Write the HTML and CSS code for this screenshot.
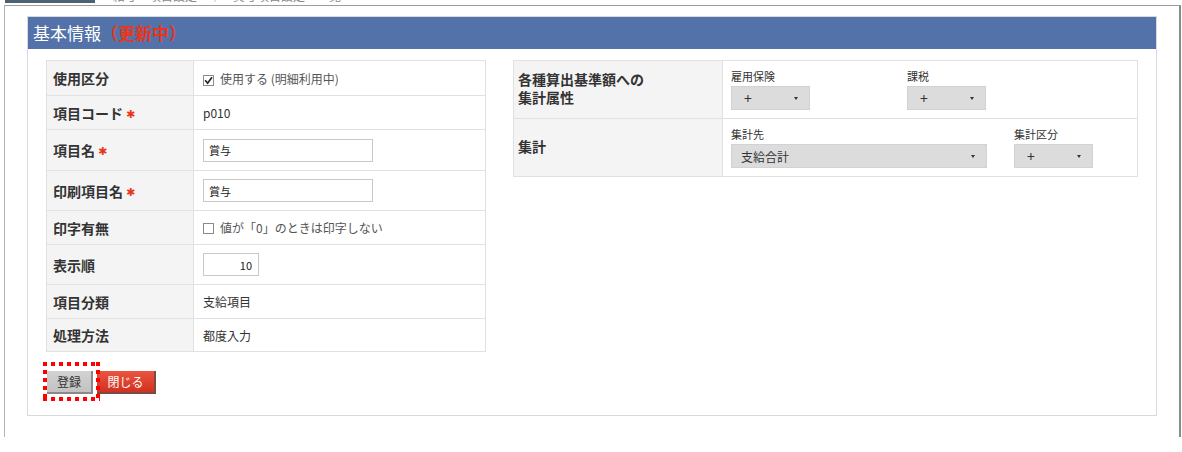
FILE: index.html
```html
<!DOCTYPE html>
<html lang="ja">
<head>
<meta charset="utf-8">
<title>基本情報</title>
<link rel="stylesheet" href="styles.css">
</head>
<body>
<div class="topstrip"><span class="tabbar"></span><span class="crumbs">給与　項目設定　｜　賞与項目設定　一覧</span></div>
<div class="frame">
  <div class="panel">
    <div class="panel-head"><span class="title">基本情報</span><span class="status">（更新中）</span></div>
    <div class="panel-body">
      <div class="tables">
        <table class="form form-left">
          <colgroup><col class="c-label-l"><col></colgroup>
          <tr class="r-s r-first"><th>使用区分</th><td><span class="cb"><svg viewBox="0 0 9 9" width="9" height="9"><path d="M1.2 4.3 L3.6 7.2 L8 1.2" fill="none" stroke="#222" stroke-width="1.7"/></svg></span><span class="cb-text">使用する (明細利用中)</span></td></tr>
          <tr class="r-s"><th>項目コード<span class="req">✱</span></th><td>p010</td></tr>
          <tr class="r-l r-big"><th>項目名<span class="req">✱</span></th><td><input class="txt" type="text" value="賞与"></td></tr>
          <tr class="r-l"><th>印刷項目名<span class="req">✱</span></th><td><input class="txt" type="text" value="賞与"></td></tr>
          <tr class="r-s"><th>印字有無</th><td><span class="cb"></span><span class="cb-text">値が「0」のときは印字しない</span></td></tr>
          <tr class="r-l"><th>表示順</th><td><input class="txt num" type="text" value="10"></td></tr>
          <tr class="r-s"><th>項目分類</th><td>支給項目</td></tr>
          <tr class="r-s r-last"><th>処理方法</th><td>都度入力</td></tr>
        </table>
        <table class="form form-right">
          <colgroup><col class="c-label-r"><col></colgroup>
          <tr class="r-r"><th>各種算出基準額への<br>集計属性</th>
            <td>
              <div class="fields">
                <div class="field f-first">
                  <div class="flabel">雇用保険</div>
                  <div class="select s-sm"><span>+</span><i class="caret"></i></div>
                </div>
                <div class="field">
                  <div class="flabel">課税</div>
                  <div class="select s-sm"><span>+</span><i class="caret"></i></div>
                </div>
              </div>
            </td></tr>
          <tr class="r-r"><th>集計</th>
            <td>
              <div class="fields">
                <div class="field f-wide">
                  <div class="flabel">集計先</div>
                  <div class="select s-lg"><span class="sel-text">支給合計</span><i class="caret"></i></div>
                </div>
                <div class="field">
                  <div class="flabel">集計区分</div>
                  <div class="select s-sm"><span>+</span><i class="caret"></i></div>
                </div>
              </div>
            </td></tr>
        </table>
      </div>
      <div class="actions">
        <span class="hl"><button class="btn btn-gray" type="button">登録</button></span>
        <button class="btn btn-red" type="button">閉じる</button>
      </div>
    </div>
  </div>
</div>
</body>
</html>
```
FILE: styles.css
```css
* { box-sizing: border-box; }
body {
  margin: 0;
  background: #fff;
  font-family: "Noto Sans CJK JP", "Noto Sans", sans-serif;
  color: #333;
}
.topstrip {
  height: 5px;
  overflow: hidden;
  display: flex;
  align-items: flex-start;
}
.tabbar {
  display: block;
  width: 90px;
  height: 3px;
  margin-left: 5px;
  background: #4b6272;
}
.crumbs {
  display: block;
  margin-left: 18px;
  margin-top: -10px;
  font-size: 12px;
  line-height: 12px;
  color: #888;
}
.frame {
  margin-left: 4px;
  width: 1177px;
  height: 432px;
  border-top: 1px solid #9c9c9c;
  border-left: 1px solid #b4b4b4;
  border-right: 2px solid #8a8a8a;
  padding: 10px 0 0 22px;
}
.panel {
  width: 1130px;
  height: 400px;
  border: 1px solid #d9d9d9;
  background: #fff;
}
.panel-head {
  height: 32px;
  background: #5272a9;
  padding-left: 5px;
  line-height: 32px;
  font-size: 17px;
  white-space: nowrap;
}
.title { color: #fff; }
.status { color: #e8361c; font-weight: bold; }
.panel-body {
  padding: 11px 18px 0 18px;
}
.tables {
  display: flex;
  align-items: flex-start;
  gap: 27px;
}
.form {
  border-collapse: collapse;
  table-layout: fixed;
  border: 1px solid #e1e1e1;
}
.form th, .form td {
  border: 1px solid #e1e1e1;
  padding: 0;
}
.form th {
  background: #f4f4f4;
  text-align: left;
  font-weight: bold;
  font-size: 14px;
  color: #333;
}
.form-left { width: 440px; }
.form-right { width: 625px; }
.c-label-l { width: 147px; }
.c-label-r { width: 209px; }
.form-left th { padding-left: 6px; }
.form-left td {
  padding-left: 9px;
  font-size: 12px;
  color: #333;
}
.r-s { height: 34px; }
.r-first { height: 35px; }
.r-last { height: 33px; }
.r-l { height: 40px; }
.r-big { height: 41px; }
.r-r { height: 58px; }
.req {
  color: #e8361c;
  font-family: "DejaVu Sans", sans-serif;
  font-size: 11px;
  margin-left: 3px;
  position: relative;
  top: -1px;
}
.cb {
  display: inline-flex;
  align-items: center;
  justify-content: center;
  width: 11px;
  height: 11px;
  border: 1px solid #8a8a8a;
  background: #fff;
  vertical-align: -1px;
}
.cb-text {
  margin-left: 6px;
  color: #555;
}
.txt {
  width: 170px;
  height: 23px;
  border: 1px solid #c9c9c9;
  padding: 0 5px;
  font-family: "Noto Sans CJK JP", "Noto Sans", sans-serif;
  font-size: 11px;
  color: #222;
  background: #fff;
  outline: none;
  display: block;
}
.txt.num {
  width: 56px;
  text-align: right;
  padding-right: 6px;
}
.form-right th {
  padding-left: 4px;
  line-height: 18px;
  vertical-align: middle;
  padding-bottom: 3px;
}
.form-right td {
  vertical-align: top;
  padding: 8px 0 0 8px;
}
.fields { display: flex; }
.f-first { width: 176px; }
.f-wide { width: 283px; }
.flabel {
  font-size: 11px;
  line-height: 14px;
  color: #333;
  margin-bottom: 3px;
}
.select {
  height: 24px;
  background: #dcdcdc;
  border: 1px solid #d2d2d2;
  display: flex;
  align-items: center;
  justify-content: space-between;
  padding: 0 11px 0 12px;
  font-size: 14px;
  color: #333;
}
.s-sm { width: 79px; }
.s-lg { width: 256px; }
.sel-text { font-size: 12px; margin-left: -3px; }
.caret {
  display: block;
  width: 0;
  height: 0;
  border-top: 3px solid #333;
  border-left: 2.5px solid transparent;
  border-right: 2.5px solid transparent;
}
.actions {
  display: flex;
  gap: 4px;
  margin-top: 19px;
  padding-left: 1px;
}
.btn {
  height: 23px;
  padding: 0;
  font-family: "Noto Sans CJK JP", "Noto Sans", sans-serif;
  font-size: 12px;
  line-height: 20px;
  border: none;
  display: block;
}
.btn-gray {
  width: 46px;
  background: linear-gradient(#d2d2d2, #c2c2c2);
  color: #333;
  border-right: 2px solid #8a8a8a;
  border-bottom: 2px solid #8a8a8a;
}
.btn-red {
  width: 59px;
  background: linear-gradient(#ea5440, #d1321f);
  color: #fff;
  border-right: 2px solid #7c4a44;
  border-bottom: 2px solid #7c4a44;
}
.hl {
  position: relative;
  display: block;
}
.hl::after {
  content: "";
  position: absolute;
  left: -4px;
  top: -9px;
  right: -7px;
  bottom: -7px;
  z-index: 2;
  background:
    repeating-linear-gradient(90deg, #f00 0 4px, transparent 4px 8px) left top / 100% 4px no-repeat,
    repeating-linear-gradient(90deg, #f00 0 4px, transparent 4px 8px) left bottom / 100% 4px no-repeat,
    repeating-linear-gradient(180deg, #f00 0 4px, transparent 4px 8px) left top / 4px 100% no-repeat,
    repeating-linear-gradient(180deg, #f00 0 4px, transparent 4px 8px) right top / 4px 100% no-repeat;
}
```
